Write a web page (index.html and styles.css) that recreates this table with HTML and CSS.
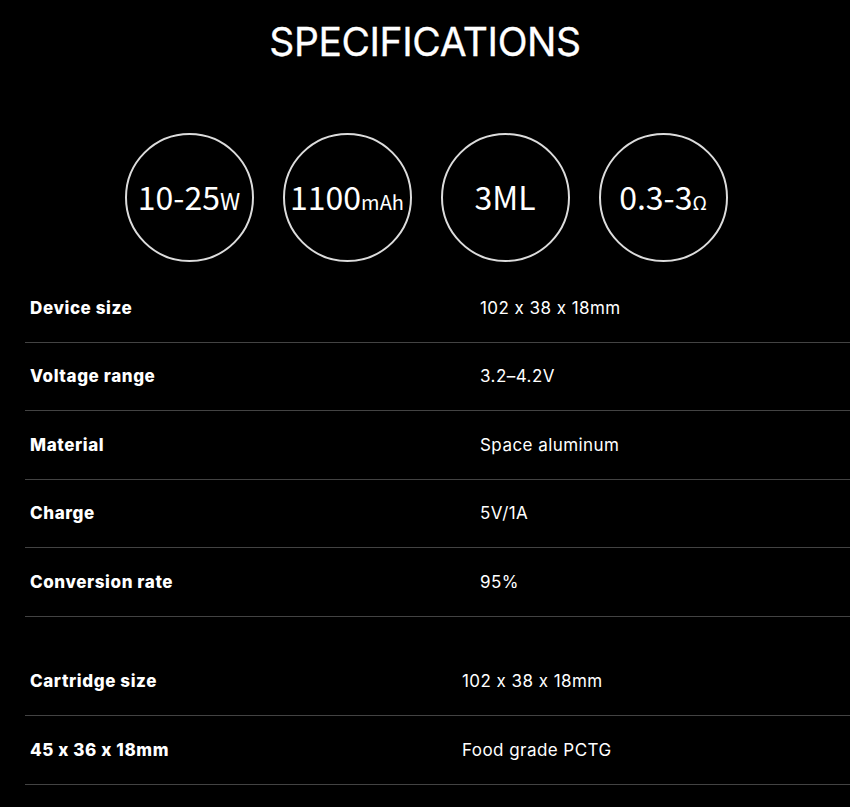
FILE: index.html
```html
<!DOCTYPE html>
<html lang="en">
<head>
<meta charset="utf-8">
<title>Specifications</title>
<link rel="stylesheet" href="styles.css">
</head>
<body>
<main class="page">
  <h1 class="title">SPECIFICATIONS</h1>
  <div class="badges">
    <div class="badge"><span class="badge-num">10-25</span><span class="badge-unit badge-unit--w">W</span></div>
    <div class="badge"><span class="badge-num">1100</span><span class="badge-unit">mAh</span></div>
    <div class="badge"><span class="badge-num">3ML</span></div>
    <div class="badge"><span class="badge-num">0.3-3</span><span class="badge-unit badge-unit--ohm">Ω</span></div>
  </div>
  <section class="specs">
    <div class="row"><span class="label">Device size</span><span class="value">102 x 38 x 18mm</span></div>
    <div class="row"><span class="label">Voltage range</span><span class="value">3.2–4.2V</span></div>
    <div class="row"><span class="label">Material</span><span class="value">Space aluminum</span></div>
    <div class="row"><span class="label">Charge</span><span class="value">5V/1A</span></div>
    <div class="row"><span class="label">Conversion rate</span><span class="value">95%</span></div>
  </section>
  <section class="specs specs--cartridge">
    <div class="row"><span class="label">Cartridge size</span><span class="value">102 x 38 x 18mm</span></div>
    <div class="row"><span class="label">45 x 36 x 18mm</span><span class="value">Food grade PCTG</span></div>
  </section>
</main>
</body>
</html>
```

FILE: styles.css
```css
html, body {
  margin: 0;
  padding: 0;
  background: #000;
}

.page {
  width: 850px;
  min-height: 807px;
  background: #000;
  color: #fff;
  font-family: "Inter", "Noto Sans", sans-serif;
  font-feature-settings: "calt" 0;
  overflow: hidden;
}

.title {
  margin: 0;
  padding-top: 18px;
  height: 113px;
  box-sizing: border-box;
  text-align: center;
  font-family: "Inter", sans-serif;
  font-weight: 400;
  font-size: 39px;
  line-height: 48px;
  letter-spacing: -0.4px;
  -webkit-text-stroke: 0.3px #fff;
  color: #fff;
}

.badges {
  display: flex;
  justify-content: center;
  gap: 29px;
  padding-left: 2px;
  height: 129px;
  margin-top: 20px;
}

.badge {
  width: 129px;
  height: 129px;
  box-sizing: border-box;
  border: 2px solid #dcdcdc;
  border-radius: 50%;
  display: flex;
  align-items: baseline;
  justify-content: center;
  padding-top: 41px;
  font-family: "Noto Sans CJK SC", "Noto Sans", sans-serif;
  color: #fff;
}

.badge-num {
  font-size: 32px;
  line-height: 40px;
  font-weight: 400;
}

.badge-unit {
  font-size: 20px;
  line-height: 40px;
}

.badge-unit--w {
  font-size: 23px;
}

.badge-unit--ohm {
  font-size: 19px;
}

.specs {
  margin-top: 12px;
  margin-left: 25px;
}

.specs--cartridge {
  margin-top: 31px;
}

.row {
  display: grid;
  grid-template-columns: 455px 1fr;
  align-items: center;
  height: 68.5px;
  box-sizing: border-box;
  border-bottom: 1.5px solid #434343;
  font-size: 17px;
}

.specs--cartridge .row {
  grid-template-columns: 437px 1fr;
}

.label {
  padding-left: 5px;
  font-weight: 800;
  letter-spacing: 0.6px;
}

.value {
  font-weight: 400;
  letter-spacing: 0.45px;
}
```
